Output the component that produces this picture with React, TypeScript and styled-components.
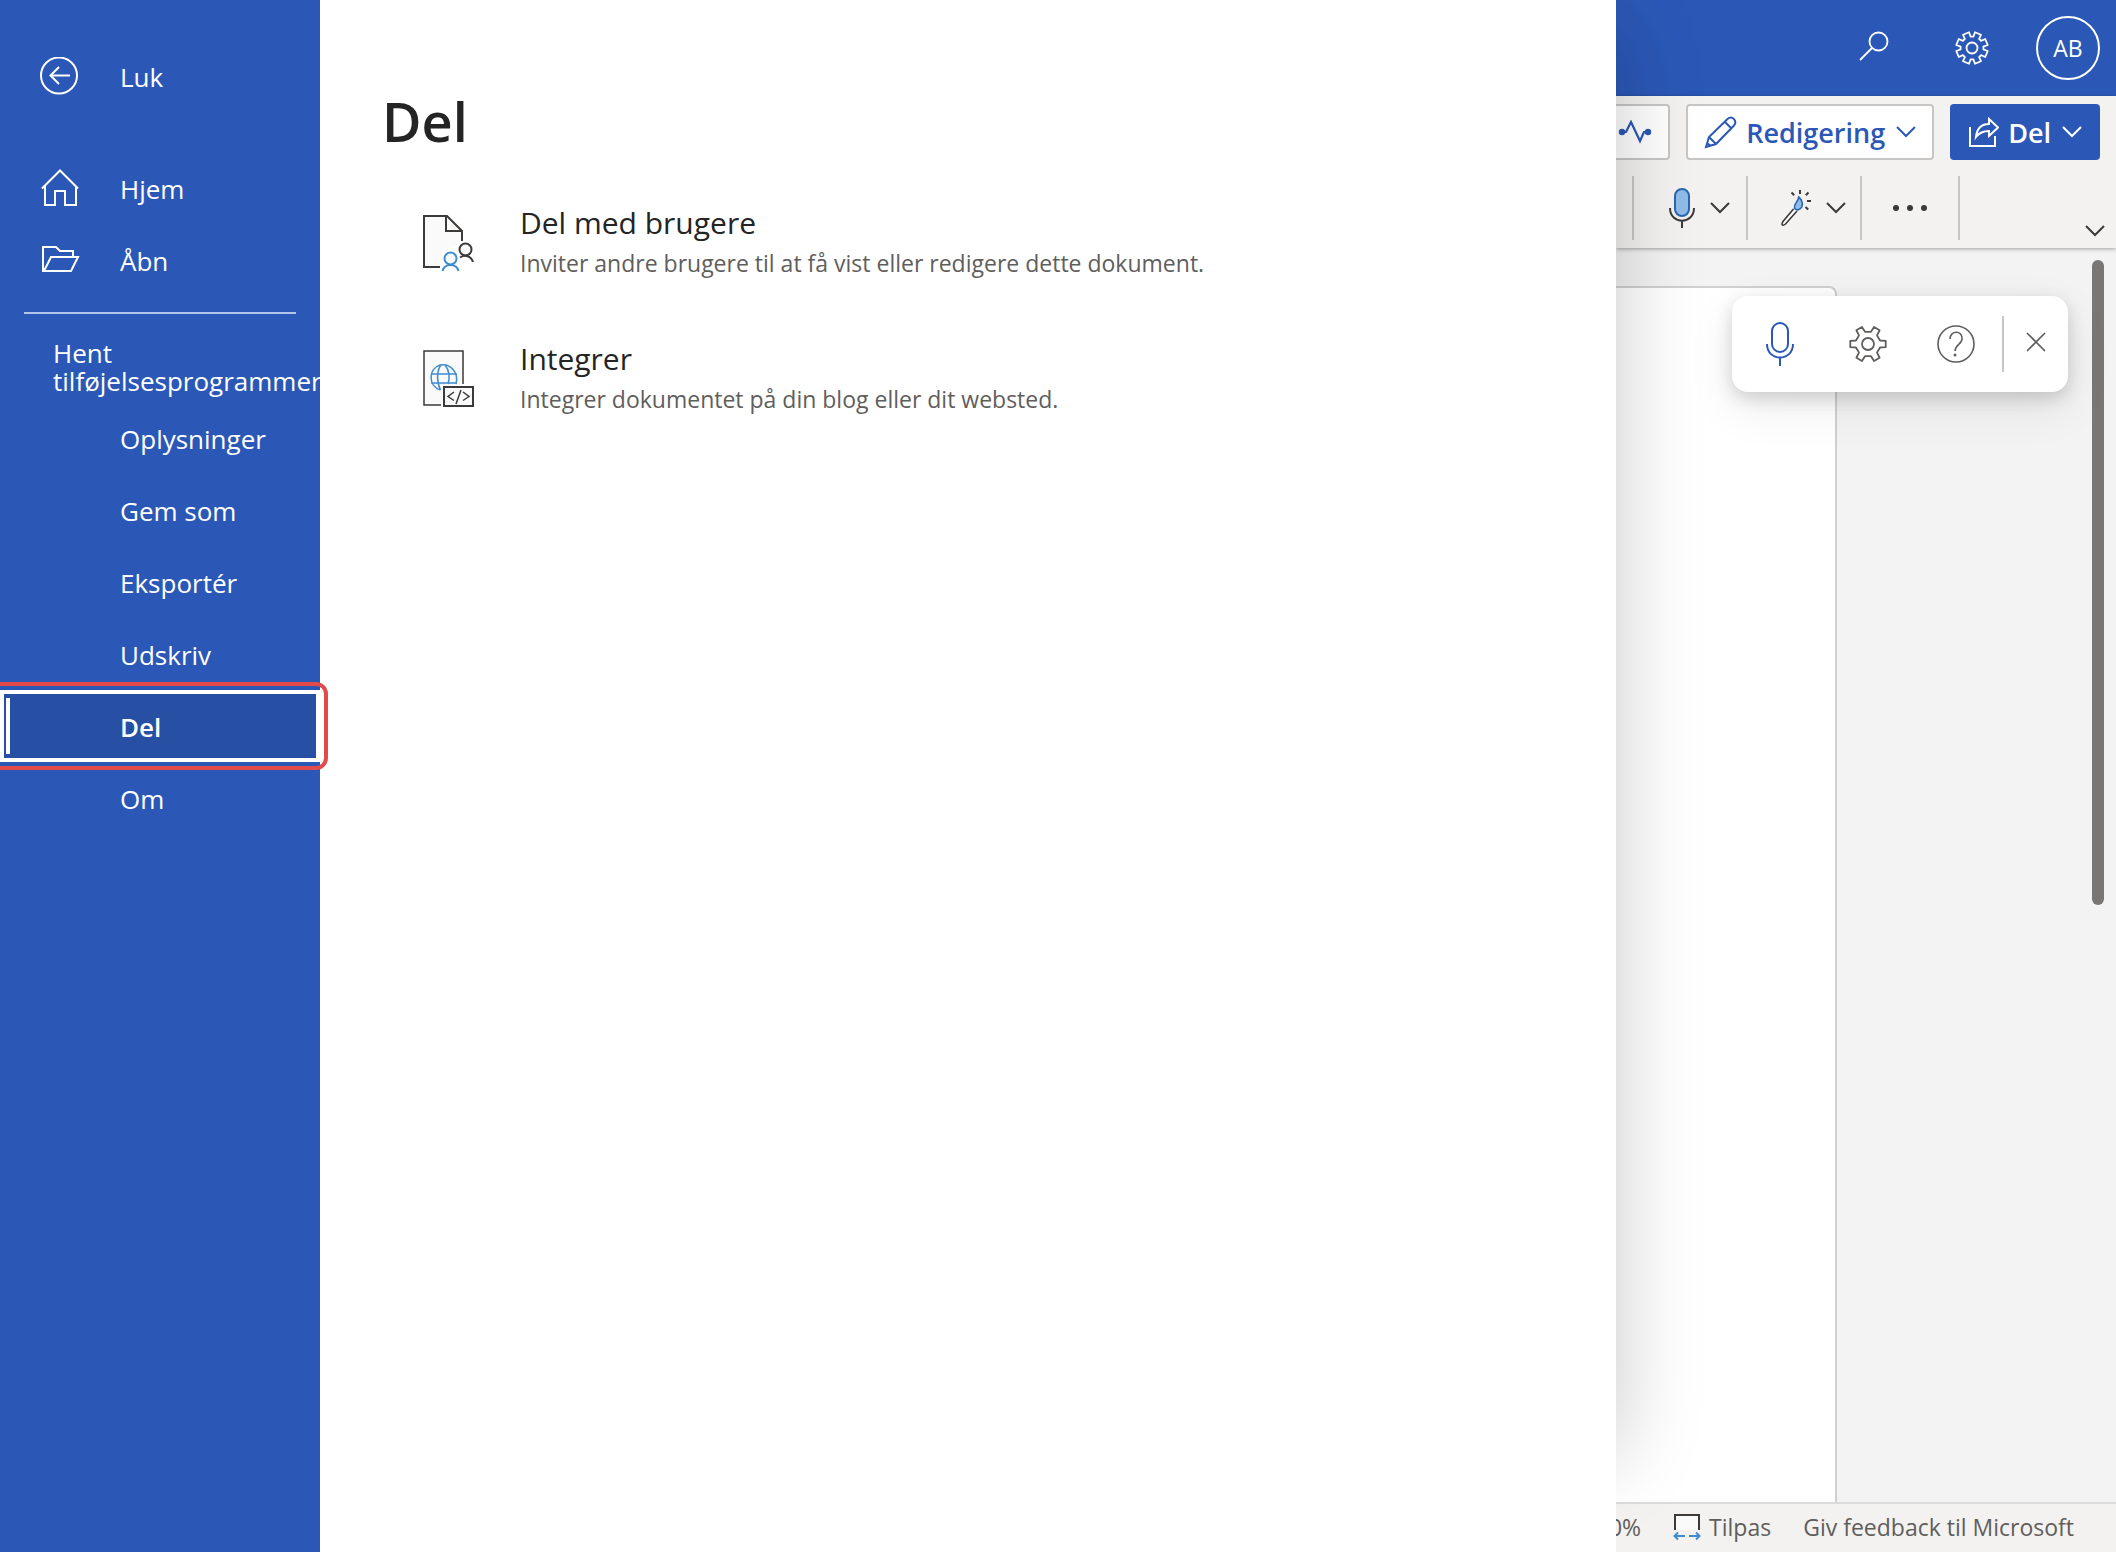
import React from 'react';
import styled, { createGlobalStyle, css } from 'styled-components';

const c = {
  brand: '#2b58b7',
  brandDark: '#2750a5',
  ink: '#242424',
  icon: '#3b3a39',
  muted: '#605e5c',
  chrome: '#f3f2f1',
  canvas: '#f3f3f3',
  line: '#c8c6c4',
  azure: '#3f8bd0',
  sky: '#90bce8',
  callout: '#e34a4a',
};

const Global = createGlobalStyle`
  *, *::before, *::after { box-sizing: border-box; }
  body { margin: 0; }
  body, button {
    font-family: 'Segoe UI', 'Open Sans', 'Noto Sans', sans-serif;
  }
  button { border: 0; padding: 0; background: none; cursor: pointer; color: inherit; }
  svg { display: block; flex: none; }
`;

const Page = styled.div`
  display: grid;
  grid-template-columns: 320px minmax(0, 1fr) 500px;
  min-height: 100vh;
  overflow: hidden;
`;

/* ---------- Left navigation ---------- */

const Side = styled.nav`
  position: relative;
  z-index: 3;
  padding-top: 40px;
  background: ${c.brand};
  color: #fff;
`;

const NavList = styled.ul<{ $gap?: boolean }>`
  list-style: none;
  margin: ${p => (p.$gap ? '40px 0 0' : '0')};
  padding: 0;
`;

const NavButton = styled.button<{ $active?: boolean }>`
  position: relative;
  display: flex;
  align-items: center;
  width: 100%;
  height: 72px;
  font-size: 26px;
  line-height: 36px;
  text-align: left;
  ${p => p.$active && css`
    background: ${c.brandDark};
    border: 4px solid #fff;
    font-weight: 600;
    &::before {
      content: '';
      position: absolute;
      inset: 4px auto 4px 2px;
      width: 4px;
      background: #fff;
    }
    &::after {
      content: '';
      position: absolute;
      inset: -12px -12px -12px -16px;
      border: 4px solid ${c.callout};
      border-radius: 12px;
    }
  `}
`;

const NavIcon = styled.span<{ $active?: boolean }>`
  display: flex;
  width: ${p => (p.$active ? '116px' : '120px')};
  padding-left: 40px;
  flex: none;
`;

const NavLabel = styled.span`
  padding-top: 2px;
`;

const Divider = styled.hr`
  height: 2px;
  margin: 16px 24px 0;
  border: 0;
  background: #b3c5ea;
`;

const AddIns = styled.button`
  display: block;
  width: 100%;
  padding: 25px 0 7px 53px;
  overflow: hidden;
  font-size: 26px;
  line-height: 28px;
  text-align: left;
`;

/* ---------- Share panel ---------- */

const Panel = styled.main`
  position: relative;
  z-index: 2;
  padding: 85px 64px 0 62px;
  background: #fff;
  &::before {
    content: '';
    position: absolute;
    z-index: -1;
    inset: 30px 0 96px;
    box-shadow: 0 0 80px rgba(0, 0, 0, 0.22);
  }
  &::after {
    content: '';
    position: absolute;
    z-index: -1;
    inset: 0;
    background: #fff;
  }
`;

const Title = styled.h1`
  margin: 0;
  color: ${c.ink};
  font-size: 54px;
  font-weight: 600;
  line-height: 72px;
`;

const Options = styled.div`
  display: flex;
  flex-direction: column;
  gap: 48px;
  margin-top: 42px;
`;

const Option = styled.button`
  display: flex;
  align-items: center;
  gap: 46px;
  padding-left: 40px;
  height: 88px;
  text-align: left;
`;

const OptionText = styled.span`
  display: flex;
  flex-direction: column;
  padding-bottom: 4px;
`;

const OptionTitle = styled.span`
  color: ${c.ink};
  font-size: 30px;
  line-height: 44px;
`;

const OptionHint = styled.span`
  color: ${c.muted};
  font-size: 23px;
  line-height: 36px;
`;

/* ---------- Editor behind the panel ---------- */

const Editor = styled.section`
  position: relative;
  display: flex;
  flex-direction: column;
  min-width: 0;
  overflow: hidden;
  background: ${c.canvas};
`;

const TopBar = styled.header`
  display: flex;
  align-items: center;
  justify-content: flex-end;
  gap: 30px;
  height: 96px;
  padding-right: 16px;
  background: ${c.brand};
  color: #fff;
`;

const IconButton = styled.button`
  display: flex;
  align-items: center;
  justify-content: center;
`;

const TopIcon = styled(IconButton)`
  width: 68px;
  height: 64px;
`;

const Avatar = styled.button`
  width: 64px;
  height: 64px;
  border: 2px solid #fff;
  border-radius: 50%;
  font-size: 23px;
`;

const Ribbon = styled.div`
  position: relative;
  z-index: 1;
  height: 152px;
  padding-top: 8px;
  background: ${c.chrome};
  box-shadow: 0 1px 4px rgba(0, 0, 0, 0.35);
`;

const Actions = styled.div`
  display: flex;
  justify-content: flex-end;
  gap: 16px;
  padding-right: 16px;
`;

const ActionButton = styled.button<{ $primary?: boolean }>`
  display: flex;
  flex: none;
  align-items: center;
  gap: 9px;
  height: 56px;
  padding: 0 16px;
  border: 2px solid ${p => (p.$primary ? c.brand : c.line)};
  border-radius: 4px;
  background: ${p => (p.$primary ? c.brand : '#fff')};
  color: ${p => (p.$primary ? '#fff' : c.brand)};
  font-size: 27px;
  font-weight: 600;
`;

const ActionLabel = styled.span`
  margin-right: 2px;
`;

const Tools = styled.div`
  display: flex;
  justify-content: flex-end;
  margin-top: 16px;
`;

const ToolGroup = styled.div<{ $width: number; $single?: boolean }>`
  display: flex;
  flex: none;
  align-items: center;
  justify-content: center;
  gap: 15px;
  width: ${p => p.$width}px;
  height: 64px;
  padding-left: ${p => (p.$single ? '0' : '19px')};
  border-left: 2px solid ${c.line};
  color: ${c.icon};
`;

const ToolEnd = styled(ToolGroup)`
  justify-content: flex-end;
  align-items: flex-end;
  padding: 0 11px 3px 0;
`;

const Workspace = styled.div`
  display: flex;
  justify-content: flex-end;
  flex: 1;
`;

const Sheet = styled.div`
  flex: 1;
  margin-top: 38px;
  border: 2px solid #d0d0d0;
  border-width: 2px 2px 0 0;
  border-radius: 0 8px 0 0;
  background: #fff;
`;

const Gutter = styled.div`
  display: flex;
  justify-content: flex-end;
  width: 279px;
  padding: 12px 12px 0 0;
`;

const Thumb = styled.div`
  width: 12px;
  height: 645px;
  border-radius: 6px;
  background: #797775;
`;

const Dictation = styled.div`
  position: absolute;
  top: 296px;
  right: 48px;
  display: flex;
  align-items: center;
  height: 96px;
  padding-left: 4px;
  border-radius: 16px;
  background: #fff;
  color: ${c.muted};
  box-shadow: 0 6px 18px rgba(0, 0, 0, 0.16), 0 16px 48px rgba(0, 0, 0, 0.08);
`;

const DictIcon = styled(IconButton)`
  width: 88px;
  height: 88px;
  &:first-child { color: ${c.brand}; }
`;

const DictClose = styled(IconButton)`
  width: 66px;
  height: 56px;
  margin-left: 2px;
  padding-bottom: 4px;
  border-left: 2px solid ${c.line};
`;

const StatusBar = styled.footer`
  display: flex;
  align-items: center;
  justify-content: flex-end;
  gap: 32px;
  height: 50px;
  padding: 0 42px 2px 0;
  border-top: 2px solid #dddbd9;
  background: ${c.chrome};
`;

const StatusButton = styled.button`
  display: flex;
  flex: none;
  align-items: center;
  gap: 8px;
  color: ${c.muted};
  font-size: 23px;
  line-height: 32px;
  white-space: nowrap;
`;

/* ---------- Icons ---------- */

const stroke = { fill: 'none', stroke: 'currentColor', strokeWidth: 2 } as const;

const BackIcon = () => (
  <svg width="38" height="38" viewBox="0 0 38 38" {...stroke}>
    <circle cx="19" cy="18.500" r="18" />
    <path d="M30 18.500H10.500M19 10l-8.500 8.500L19 27" />
  </svg>
);
const HomeIcon = () => (
  <svg width="40" height="38" viewBox="0 0 40 38" {...stroke}>
    <path d="M2 19.500 20 1.500l18 18M5 17v19h10V22h10v14h11V17" />
  </svg>
);
const FolderIcon = () => (
  <svg width="40" height="28" viewBox="0 0 40 28" {...stroke}>
    <path d="M4 25H3V1h13l4 4h13v6M4 25l7-14h27l-7 14z" />
  </svg>
);
const SharePeopleIcon = () => (
  <svg width="52" height="58" viewBox="0 0 52 58" fill="none" strokeWidth="2">
    <path d="M2 2v51h16V40l22-13V17L25 2z" fill="#fafafa" />
    <path d="M18 53H2V2h23l15 15v10M24 2v15h16" stroke={c.icon} />
    <g stroke={c.icon}>
      <circle cx="43.500" cy="35.500" r="6" fill="#fafafa" />
      <path d="M38 43.500c5-3 11-2 13 4.500" />
    </g>
    <g stroke={c.azure}>
      <circle cx="28.500" cy="44.500" r="6" fill="#fafafa" />
      <path d="M20.500 57c2-8 14-8 16 0" />
    </g>
  </svg>
);
const EmbedIcon = () => (
  <svg width="52" height="58" viewBox="0 0 52 58" fill="none" strokeWidth="2">
    <path d="M2 1h39v34H20v20H2z" fill="#fafafa" />
    <path d="M19 55H2V1h39v33" stroke={c.icon} strokeWidth="1.500" />
    <path d="M18.500 40C6 36 6 19 18 15c10-2 19 7 16 19M9 24h26M9 33h25M18.500 40c-4-8-4-19 .5-25M26 34c2-7 2-13-3-19" stroke={c.azure} strokeWidth="1.500" />
    <rect x="22" y="37" width="29" height="19" fill="#fafafa" stroke={c.icon} />
    <path d="m32 42-6 4.500 6 4M41 42l6 4.500-6 4M39 40l-5 14" stroke={c.icon} strokeWidth="1.500" />
  </svg>
);
const SearchIcon = () => (
  <svg width="30" height="34" viewBox="0 0 30 34" {...stroke} strokeWidth={1.8}>
    <circle cx="19.500" cy="10.500" r="9" />
    <path d="M13 17 1 29" />
  </svg>
);

/** Outlined gear: toothed rim with slanted tooth sides and a round hub. */
const Gear = ({ teeth, size, root, hub, top, base }: {
  teeth: number; size: number; root: number; hub: number; top: number; base: number;
}) => {
  const mid = size / 2;
  const outer = mid - 1;
  const step = (Math.PI * 2) / teeth;
  const offset = teeth === 8 ? step / 2 : 0;
  const pt = (r: number, a: number) =>
    `${(mid + r * Math.cos(a)).toFixed(2)} ${(mid + r * Math.sin(a)).toFixed(2)}`;
  const d = Array.from({ length: teeth }, (_, i) => {
    const a = i * step + offset;
    return [
      pt(root, a - step * base), pt(outer, a - step * top),
      pt(outer, a + step * top), pt(root, a + step * base),
    ].join('L');
  }).join('L');
  return (
    <svg width={size} height={size} viewBox={`0 0 ${size} ${size}`} {...stroke} strokeWidth={1.8} strokeLinejoin="round">
      <path d={`M${d}Z`} />
      <circle cx={mid} cy={mid} r={hub} />
    </svg>
  );
};

const CatchUpIcon = () => (
  <svg width="34" height="24" viewBox="0 0 34 24" {...stroke} strokeWidth={2.2}>
    <path d="M4 12h4l5-10 9 19 4-9h4" />
    <circle cx="4" cy="12" r="3.200" fill="currentColor" stroke="none" />
    <circle cx="30" cy="12" r="3.200" fill="currentColor" stroke="none" />
  </svg>
);
const PencilIcon = () => (
  <svg width="33" height="33" viewBox="0 0 33 33" {...stroke}>
    <path d="M2 31l3-10L23.500 3c5-4 10 2 6.500 6.500L12 28zM5 21l7 7M21 6l6.500 6.500M3 27l4 3" />
  </svg>
);
const ShareIcon = () => (
  <svg width="31" height="31" viewBox="0 0 31 31" {...stroke}>
    <path d="M2 10v19h25V19" />
    <path d="M8 20C9 11 13 7 21 7V2l9 8.500L21 19v-5c-6 0-10 2-13 6z" />
  </svg>
);
const Chevron = () => (
  <svg width="20" height="12" viewBox="0 0 20 12" {...stroke}>
    <path d="m1 1 9 9 9-9" />
  </svg>
);
const MicColorIcon = () => (
  <svg width="26" height="40" viewBox="0 0 26 40" {...stroke}>
    <rect x="6" y="1" width="14" height="27" rx="7" fill={c.sky} stroke="#2a66b4" />
    <path d="M1 20c0 17 24 17 24 0M13 33v7" />
  </svg>
);
const DesignerIcon = () => (
  <svg width="30" height="38" viewBox="0 0 30 38" {...stroke} strokeWidth={1.6}>
    <path d="M12.500 20 2 32.500c-2 3.500-.5 5 2.500 2.500L16 22" fill="#fff" />
    <path d="M13.500 19.500c-1-6 4-6 4.200-11.500 3.800 3 5 8.500 1.800 11.500-2 1.800-4 1.800-6 0z" fill={c.sky} stroke="#2a66b4" />
    <path d="M19 1v4M10.500 3.500l2.700 2.700M27.500 3.500l-2.700 2.700M26 12h4M24.500 18l2.700 2.500" strokeWidth="2" />
  </svg>
);
const MoreIcon = () => (
  <svg width="36" height="8" viewBox="0 0 36 8" fill="currentColor">
    <circle cx="4" cy="4" r="3" /><circle cx="18" cy="4" r="3" /><circle cx="32" cy="4" r="3" />
  </svg>
);
const MicIcon = () => (
  <svg width="28" height="44" viewBox="0 0 28 44" {...stroke}>
    <rect x="6" y="1" width="16" height="29" rx="8" />
    <path d="M1 22c0 18 26 18 26 0M14 36v8" />
  </svg>
);
const HelpIcon = () => (
  <svg width="38" height="38" viewBox="0 0 38 38" {...stroke} strokeWidth={1.6}>
    <circle cx="19" cy="19" r="18" />
    <path d="M13 14c0-9 13-9 12 0 0 5-7 6-7 12" />
    <circle cx="18" cy="30" r="1.500" fill="currentColor" stroke="none" />
  </svg>
);
const CloseIcon = () => (
  <svg width="20" height="20" viewBox="0 0 20 20" {...stroke} strokeWidth={1.6}>
    <path d="m1 1 18 18M19 1 1 19" />
  </svg>
);
const FitIcon = () => (
  <svg width="28" height="28" viewBox="0 0 28 28" {...stroke}>
    <path d="M2 17V2h24v15" fill="#fafafa" stroke={c.icon} />
    <path d="M12 23H1.500M16 23h10.500M5 19.500 1.500 23 5 26.500M23 19.500l3.500 3.500-3.500 3.500" stroke={c.azure} />
  </svg>
);

/* ---------- Content ---------- */

const mainNav = [
  { label: 'Hjem', Icon: HomeIcon },
  { label: 'Åbn', Icon: FolderIcon },
];
const fileNav = ['Oplysninger', 'Gem som', 'Eksportér', 'Udskriv', 'Del', 'Om'];
const options = [
  {
    title: 'Del med brugere',
    hint: 'Inviter andre brugere til at få vist eller redigere dette dokument.',
    Icon: SharePeopleIcon,
  },
  {
    title: 'Integrer',
    hint: 'Integrer dokumentet på din blog eller dit websted.',
    Icon: EmbedIcon,
  },
];

export default function App() {
  return (
    <>
      <Global />
      <Page>
        <Side aria-label="Filer">
          <NavButton><NavIcon><BackIcon /></NavIcon><NavLabel>Luk</NavLabel></NavButton>
          <NavList $gap>
            {mainNav.map(({ label, Icon }) => (
              <li key={label}>
                <NavButton><NavIcon><Icon /></NavIcon><NavLabel>{label}</NavLabel></NavButton>
              </li>
            ))}
          </NavList>
          <Divider />
          <AddIns>Hent tilføjelsesprogrammer</AddIns>
          <NavList>
            {fileNav.map(label => {
              const active = label === 'Del';
              return (
                <li key={label}>
                  <NavButton $active={active} aria-current={active ? 'page' : undefined}>
                    <NavIcon $active={active} />
                    <NavLabel>{label}</NavLabel>
                  </NavButton>
                </li>
              );
            })}
          </NavList>
        </Side>

        <Panel>
          <Title>Del</Title>
          <Options>
            {options.map(({ title, hint, Icon }) => (
              <Option key={title}>
                <Icon />
                <OptionText>
                  <OptionTitle>{title}</OptionTitle>
                  <OptionHint>{hint}</OptionHint>
                </OptionText>
              </Option>
            ))}
          </Options>
        </Panel>

        <Editor>
          <TopBar>
            <TopIcon aria-label="Søg"><SearchIcon /></TopIcon>
            <TopIcon aria-label="Indstillinger">
              <Gear teeth={8} size={34} root={11.5} hub={5.5} top={0.26} base={0.35} />
            </TopIcon>
            <Avatar>AB</Avatar>
          </TopBar>
          <Ribbon>
            <Actions>
              <ActionButton aria-label="Følg med"><CatchUpIcon /></ActionButton>
              <ActionButton><PencilIcon /><ActionLabel>Redigering</ActionLabel><Chevron /></ActionButton>
              <ActionButton $primary><ShareIcon /><ActionLabel>Del</ActionLabel><Chevron /></ActionButton>
            </Actions>
            <Tools>
              <ToolGroup $width={114}>
                <IconButton aria-label="Dikter"><MicColorIcon /></IconButton>
                <IconButton aria-label="Flere dikteringsvalg"><Chevron /></IconButton>
              </ToolGroup>
              <ToolGroup $width={114}>
                <IconButton aria-label="Designer"><DesignerIcon /></IconButton>
                <IconButton aria-label="Flere designvalg"><Chevron /></IconButton>
              </ToolGroup>
              <ToolGroup $width={98} $single>
                <IconButton aria-label="Flere indstillinger"><MoreIcon /></IconButton>
              </ToolGroup>
              <ToolEnd $width={158}>
                <IconButton aria-label="Skjul båndet"><Chevron /></IconButton>
              </ToolEnd>
            </Tools>
          </Ribbon>
          <Workspace>
            <Sheet />
            <Gutter><Thumb /></Gutter>
          </Workspace>
          <Dictation role="toolbar" aria-label="Diktering">
            <DictIcon aria-label="Start diktering"><MicIcon /></DictIcon>
            <DictIcon aria-label="Indstillinger for diktering">
              <Gear teeth={6} size={38} root={12.5} hub={6} top={0.17} base={0.27} />
            </DictIcon>
            <DictIcon aria-label="Hjælp"><HelpIcon /></DictIcon>
            <DictClose aria-label="Luk diktering"><CloseIcon /></DictClose>
          </Dictation>
          <StatusBar>
            <StatusButton>100%</StatusButton>
            <StatusButton><FitIcon />Tilpas</StatusButton>
            <StatusButton>Giv feedback til Microsoft</StatusButton>
          </StatusBar>
        </Editor>
      </Page>
    </>
  );
}
